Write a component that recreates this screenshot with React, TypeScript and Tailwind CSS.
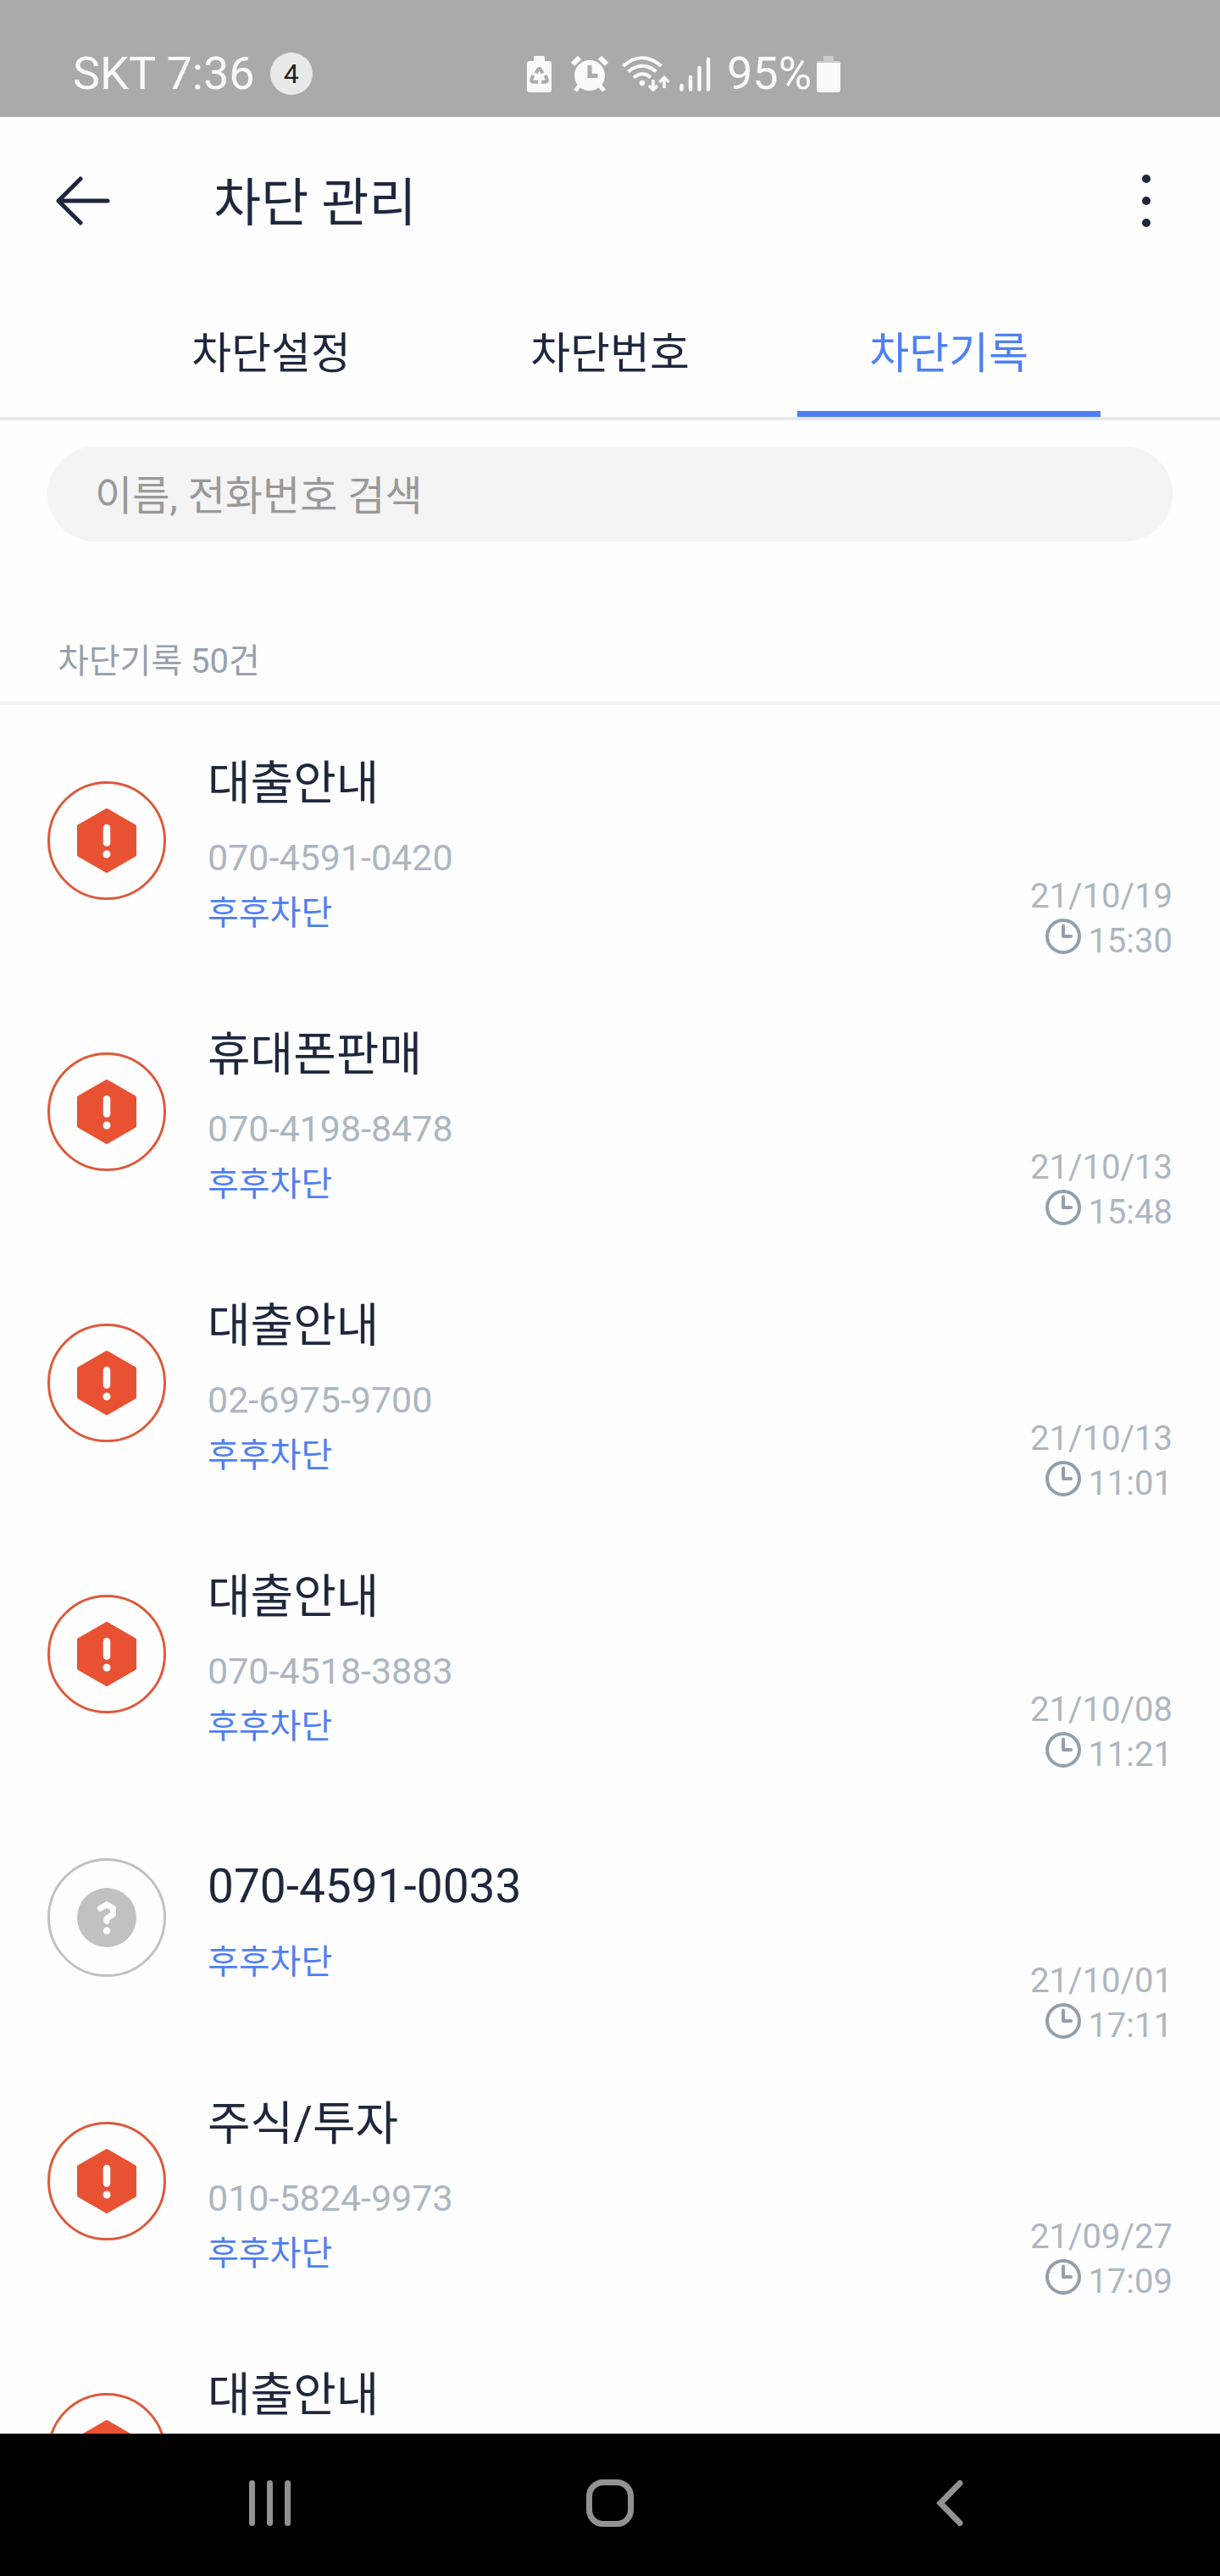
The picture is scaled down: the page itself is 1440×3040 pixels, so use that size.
type RecordItem = {
  name: string;
  phone?: string;
  tag?: string;
  date?: string;
  time?: string;
  spam: boolean;
};

const records: RecordItem[] = [
  { name: "대출안내", phone: "070-4591-0420", tag: "후후차단", date: "21/10/19", time: "15:30", spam: true },
  { name: "휴대폰판매", phone: "070-4198-8478", tag: "후후차단", date: "21/10/13", time: "15:48", spam: true },
  { name: "대출안내", phone: "02-6975-9700", tag: "후후차단", date: "21/10/13", time: "11:01", spam: true },
  { name: "대출안내", phone: "070-4518-3883", tag: "후후차단", date: "21/10/08", time: "11:21", spam: true },
  { name: "070-4591-0033", tag: "후후차단", date: "21/10/01", time: "17:11", spam: false },
  { name: "주식/투자", phone: "010-5824-9973", tag: "후후차단", date: "21/09/27", time: "17:09", spam: true },
  { name: "대출안내", spam: true },
];

const tabs = ["차단설정", "차단번호", "차단기록"];

function StatusBar() {
  return (
    <div className="flex h-[138px] shrink-0 items-center bg-[#aaaaaa] pt-[36px] pl-[86px] text-[#fafafa]">
      <div className="flex w-[536px] items-center gap-[18px]">
        <span className="text-[54px] leading-[60px]">SKT 7:36</span>
        <span className="flex size-[50px] items-center justify-center rounded-full bg-[#e9e9e9] text-[32px] leading-[40px] text-[#222222]">
          4
        </span>
      </div>
      <div className="flex items-center">
        <svg className="mr-[23px] h-[43px] w-[29px]" viewBox="0 0 29 43" fill="currentColor">
          <path d="M9 0h10a2 2 0 0 1 2 2v4h5a3 3 0 0 1 3 3v31a3 3 0 0 1-3 3H3a3 3 0 0 1-3-3V9a3 3 0 0 1 3-3h5V2a2 2 0 0 1 1-2z" />
          <g fill="none" stroke="#aaaaaa" strokeWidth="4">
            <path d="M10.500 20.500l2.300-4.200q1.700-2.600 3.400 0l2.300 4.200" />
            <path d="M21.500 23l2 4q1 3.500-2 3.700H17" />
            <path d="M7.500 23l-2 4q-1 3.500 2 3.700H13" />
          </g>
        </svg>
        <svg className="mr-4 h-[43px] w-[44px]" viewBox="0 0 44 43" fill="currentColor">
          <circle cx="22" cy="23" r="18" />
          <path d="M2 10L10 2M34 2l8 8" stroke="currentColor" strokeWidth="6" />
          <path d="M10 35l-5 6M34 35l5 6" stroke="currentColor" strokeWidth="5" />
          <path d="M22 11v12.500h9.500" fill="none" stroke="#aaaaaa" strokeWidth="5" />
        </svg>
        <svg className="mr-[11px] h-[43px] w-[57px]" viewBox="0 0 57 43" fill="none" stroke="currentColor" strokeWidth="4">
          <path d="M1.500 12Q24-7.500 46.500 12M7.500 18.500Q24 5 40.500 18.500M14 25.500Q24 17 34 25.500" />
          <circle cx="24" cy="32" r="3.300" fill="currentColor" stroke="none" />
          <path d="M37 28v12M32 35l5 5 5-5M50 38V26M44.500 31l5.500-5.500 5.500 5.500" strokeWidth="3.500" />
        </svg>
        <svg className="mr-[19px] h-[41px] w-[37px]" viewBox="0 0 37 41" fill="none" stroke="currentColor" strokeWidth="4.500" strokeLinecap="round">
          <path d="M2.500 34v4.500M13 24v14.500M23.500 13v25.500M34 3v35.500" />
        </svg>
        <span className="mr-1.5 text-[54px] leading-[60px]">95%</span>
        <svg className="h-[43px] w-[28px]" viewBox="0 0 28 43" fill="currentColor">
          <path d="M8 0h12v6h7l1 3H0l1-3h7z" fill="#cccccc" />
          <path d="M0 8h28v32a3 3 0 0 1-3 3H3a3 3 0 0 1-3-3z" />
        </svg>
      </div>
    </div>
  );
}

function SpamIcon() {
  return (
    <svg className="size-[140px] shrink-0" viewBox="0 0 140 140">
      <circle cx="70" cy="70" r="68.500" fill="none" stroke="#dd5a3c" strokeWidth="3" />
      <path
        d="M70 34L103 53V87L70 106L37 87V53Z"
        fill="#e85233"
        stroke="#e85233"
        strokeWidth="4"
        strokeLinejoin="round"
      />
      <path d="M70 55v17.500" stroke="#ffffff" strokeWidth="8.500" strokeLinecap="round" />
      <circle cx="70" cy="86" r="4.500" fill="#ffffff" />
    </svg>
  );
}

function UnknownIcon() {
  return (
    <svg className="size-[140px] shrink-0" viewBox="0 0 140 140">
      <circle cx="70" cy="70" r="68.500" fill="none" stroke="#c1c1c1" strokeWidth="3" />
      <circle cx="70" cy="70" r="35" fill="#c1c1c1" />
      <path
        d="M62.500 59L70 54.500L77.500 59V66L70 71V74"
        fill="none"
        stroke="#ffffff"
        strokeWidth="7"
        strokeLinecap="round"
        strokeLinejoin="round"
      />
      <circle cx="70" cy="85.500" r="4.200" fill="#ffffff" />
    </svg>
  );
}

function RecordRow({ item }: { item: RecordItem }) {
  return (
    <li className={`flex shrink-0 items-start px-14 ${item.spam ? "h-[320px]" : "h-[302px]"}`}>
      <div className={item.spam ? "pt-[90px]" : "pt-[81px]"}>
        {item.spam ? <SpamIcon /> : <UnknownIcon />}
      </div>
      <div className={`ml-[49px] min-w-0 flex-1 ${item.spam ? "pt-[52px]" : "pt-[74px]"}`}>
        <h2 className="mb-[22px] text-[55px] leading-[80px]">{item.name}</h2>
        {item.phone && <p className="mb-3 text-[43px] leading-[52px] text-[#adb6c0]">{item.phone}</p>}
        {item.tag && <p className="text-[40px] leading-[56px] text-[#4f80f3]">{item.tag}</p>}
      </div>
      {item.date && (
        <div className="pt-[199px] text-right text-[40px] leading-[53px] text-[#adb6c0]">
          <p>{item.date}</p>
          <p className="flex items-start justify-end gap-2">
            <svg className="size-[42px]" viewBox="0 0 42 42" fill="none" stroke="#949eac" strokeWidth="4">
              <circle cx="21" cy="21" r="19" />
              <path d="M21 8.500v12.500h9" strokeLinecap="round" strokeLinejoin="round" />
            </svg>
            {item.time}
          </p>
        </div>
      )}
    </li>
  );
}

export default function App() {
  return (
    <div className="flex h-screen flex-col overflow-hidden bg-[#fefefe] font-['Roboto','Noto_Sans_CJK_KR',sans-serif] text-[#1f273d]">
      <StatusBar />

      <header className="flex h-[198px] shrink-0 items-center pr-[75px] pl-[66px]">
        <button type="button" aria-label="뒤로">
          <svg className="h-[58px] w-16" viewBox="0 0 64 58" fill="none" stroke="currentColor" strokeWidth="5" strokeLinecap="round" strokeLinejoin="round">
            <path d="M61 29H3M29 3L3 29l26 26" />
          </svg>
        </button>
        <h1 className="ml-[122px] flex-1 pt-1.5 text-[61px] leading-[80px]">차단 관리</h1>
        <button type="button" aria-label="더보기" className="flex w-6 flex-col items-center gap-4">
          <span className="size-[10px] rounded-full bg-[#1f273d]" />
          <span className="size-[10px] rounded-full bg-[#1f273d]" />
          <span className="size-[10px] rounded-full bg-[#1f273d]" />
        </button>
      </header>

      <nav className="grid h-[160px] shrink-0 grid-cols-3 border-b-4 border-[#e9e9eb] px-[120px]">
        {tabs.map((tab) => (
          <button
            key={tab}
            type="button"
            className={`mx-[21px] border-b-[7px] pt-[14px] text-[51px] leading-[72px] ${
              tab === "차단기록" ? "border-[#4f80f3] text-[#4f80f3]" : "border-transparent"
            }`}
          >
            {tab}
          </button>
        ))}
      </nav>

      <div className="shrink-0 px-14 pt-[31px]">
        <input
          type="search"
          aria-label="이름, 전화번호 검색"
          placeholder="이름, 전화번호 검색"
          className="block h-28 w-full rounded-full bg-[#f4f4f4] px-14 pt-1 text-[48px] leading-[64px] placeholder:text-[#999999]"
        />
      </div>

      <p className="mt-[114px] shrink-0 border-b-4 border-[#edf2f6] px-[68px] pb-[19px] text-[40px] leading-[56px] text-[#96a0ac]">
        차단기록 50건
      </p>

      <ul className="flex min-h-0 flex-1 flex-col overflow-hidden">
        {records.map((item, i) => (
          <RecordRow key={i} item={item} />
        ))}
      </ul>

      <div className="grid h-[168px] shrink-0 grid-cols-3 items-center bg-black px-[118px] pb-1 text-[#929292]">
        <button type="button" aria-label="최근 앱" className="flex justify-center gap-[14px]">
          <span className="h-[54px] w-[7px] rounded-full bg-[#929292]" />
          <span className="h-[54px] w-[7px] rounded-full bg-[#929292]" />
          <span className="h-[54px] w-[7px] rounded-full bg-[#929292]" />
        </button>
        <button type="button" aria-label="홈" className="flex justify-center">
          <span className="size-[56px] rounded-[20px] border-[7px] border-[#929292]" />
        </button>
        <button type="button" aria-label="뒤로 가기" className="flex justify-center">
          <svg className="h-14 w-8" viewBox="0 0 32 56" fill="none" stroke="currentColor" strokeWidth="7" strokeLinecap="round">
            <path d="M28 4.500L5 28l23 23.500" />
          </svg>
        </button>
      </div>
    </div>
  );
}
